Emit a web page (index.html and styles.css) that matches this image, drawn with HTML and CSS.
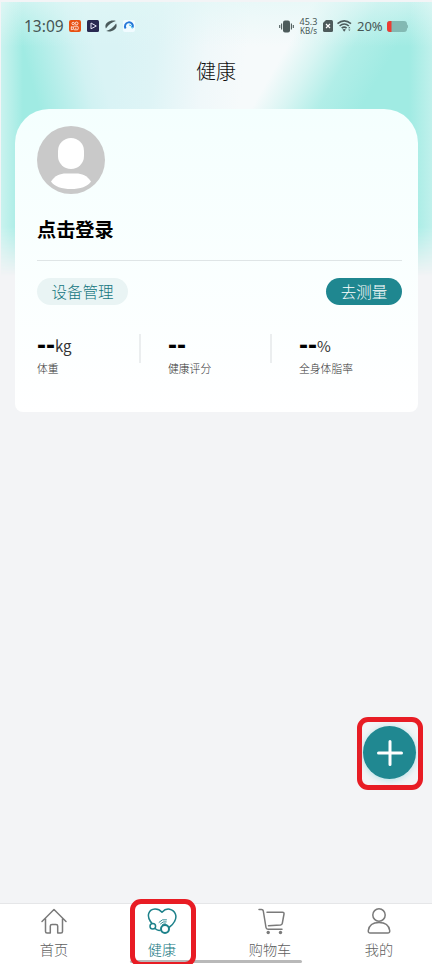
FILE: index.html
```html
<!DOCTYPE html>
<html lang="zh-CN">
<head>
<meta charset="utf-8">
<title>健康</title>
<link rel="stylesheet" href="styles.css">
</head>
<body>
<div class="app">
  <div class="backdrop"></div>
  <header class="status">
    <span class="time">13:09</span>
    <div class="apps">
      <svg width="12" height="12" viewBox="0 0 12 12"><rect width="12" height="12" rx="2" fill="#e85112"/><g fill="none" stroke="#fff" stroke-width=".8"><circle cx="4.2" cy="3.5" r="1.2"/><circle cx="7.6" cy="3.4" r="1.4"/><rect x="4.6" y="6.2" width="4.600" height="3.6" rx="1"/><path d="M4.3 7.3 2.3 6.7V9.7L4.3 9.1M6 8.2h1.5"/></g></svg>
      <svg width="12" height="12" viewBox="0 0 12 12"><rect width="12" height="12" rx="1.5" fill="#292951"/><path d="M4 8.800V3L9.3 6 4 8.800" fill="none" stroke="#e4e2f4" stroke-width="1"/></svg>
      <svg width="12" height="12" viewBox="0 0 12 12"><path d="M.9 8.500C-1.500 3.500 5-.8 10.900 1 7.500 1.700 3.600 4.300.9 8.500ZM11.100 3.500C13.500 8.500 7 12.800 1.100 11 4.500 10.300 8.400 7.700 11.100 3.500Z" fill="#4b5b5c"/></svg>
      <svg width="12" height="12" viewBox="0 0 12 12"><rect width="12" height="12" rx="2" fill="#f1fbff"/><path d="M2.600 8.500A4 4 0 1 1 9.800 7.500" fill="none" stroke="#2677d8" stroke-width="2"/><path d="M6 5Q8.500 4.500 9.300 8.500" fill="none" stroke="#37b9f0" stroke-width="1"/></svg>
    </div>
    <div class="signals">
      <svg class="vibrate" width="15" height="13" viewBox="0 0 15 13"><rect x="4" y=".5" width="7" height="12" rx="2" fill="#4d5b5b"/><path d="M2.6 3.4v6.2M12.4 3.4v6.2M.7 5v3M14.3 5v3" stroke="#4d5b5b" stroke-width="1.1"/></svg>
      <div class="speed"><span>45.3</span><span>KB/s</span></div>
      <svg class="sim" width="10" height="12" viewBox="0 0 10 12"><path d="M3 0h5.500Q10 0 10 1.500v9Q10 12 8.500 12h-7Q0 12 0 10.500V3Z" fill="#4d5b5b"/><path d="m3 4 4 4m0-4L3 8" stroke="#fff" stroke-width="1.200"/></svg>
      <svg class="wifi" width="15" height="12" viewBox="0 0 15 12"><g fill="none" stroke="#4d5b5b" stroke-width="1.600"><path d="M.5 3.700Q7.200-1.800 14 3.700"/><path d="M2.600 6Q7.200 2 11.900 6"/><path d="M4.700 8.200Q7.200 6 9.600 8.200"/></g><path d="M5.500 9.600Q7.200 8.400 8.900 9.600L7.200 11.700Z" fill="#4d5b5b"/><path d="m11.200 8.300 1.100-1.500 1.100 1.500Zm0 1.300 1.100 1.500 1.100-1.500Z" fill="#4d5b5b"/></svg>
      <span class="percent">20%</span>
      <svg class="battery" width="21" height="11" viewBox="0 0 21 11"><rect width="20" height="11" rx="3" fill="#83b9b3"/><path d="M20 3.500q1 0 1 2t-1 2Z" fill="#83b9b3"/><path d="M3 0h1.500v11H3Q0 11 0 8V3Q0 0 3 0Z" fill="#ed3b32"/></svg>
    </div>
  </header>
  <h1 class="title">健康</h1>
  <main class="card">
    <svg class="avatar" width="68" height="68" viewBox="0 0 68 68"><circle cx="34" cy="34" r="34" fill="#c9c9c9"/><rect x="21" y="12" width="26" height="31" rx="13" fill="#fff"/><path d="M14 55.500C18 49.500 23 47.500 29 47.500H39C45 47.500 50 49.500 54 55.500 51 60.500 43 63 34 63S17 60.500 14 55.500Z" fill="#fff"/></svg>
    <div class="login">点击登录</div>
    <div class="actions">
      <button class="pill device">设备管理</button>
      <button class="pill measure">去测量</button>
    </div>
    <div class="stats">
      <div class="stat"><div class="value"><b>--</b>kg</div><div class="label">体重</div></div>
      <div class="stat"><div class="value"><b>--</b></div><div class="label">健康评分</div></div>
      <div class="stat"><div class="value"><b>--</b>%</div><div class="label">全身体脂率</div></div>
    </div>
  </main>
  <div class="fab-frame"><button class="fab"><svg width="26" height="26" viewBox="0 0 26 26"><path d="M13 1.500v23M1.500 13h23" stroke="#fff" stroke-width="3" stroke-linecap="round"/></svg></button></div>
  <nav class="tabs">
    <div class="tab"><svg width="28" height="28" viewBox="0 0 28 28"><path d="M2 14.500 14 2.500 26 14.500M5.500 12V24.500Q5.500 26 7 26H10.300V19Q10.300 17.500 12 17.500H16Q17.700 17.500 17.700 19V26H21Q22.500 26 22.500 24.500V12"/></svg><span>首页</span></div>
    <div class="tab active"><svg width="30" height="28" viewBox="0 0 30 28"><path d="M3.500 14.500C-.5 9 1.500 2.300 8 2 11.500 1.900 13.500 3.500 15 5.200 17 3 19.800 1.700 22.500 2.200 28.500 3.500 30.500 9.500 27.500 14.500 26 17.500 24.300 19 22 20.500"/><path d="M5 16.500 3.500 14.500M8 21.500Q10.500 23.800 13 23.300" /><circle cx="5.800" cy="19.300" r="2.800"/><circle cx="18" cy="22" r="4" stroke-width="2"/><path d="M12 15.300Q15 11.500 19.500 12.700M13.500 16.800Q16 14 19.200 14.800M15.500 17.500Q17 16.500 18.500 16.800" stroke-width=".9"/></svg><span>健康</span></div>
    <div class="tab"><svg class="cart" width="28" height="28" viewBox="0 0 28 28"><path d="M1 2.500H3.500Q5 2.500 5.300 4L8 20.500Q8.200 22.300 10 22.300H24M9 5.300H24.500Q26.300 5.300 26 7L24.300 16.300Q24 17.800 22.500 18L10.500 18.800"/><circle class="dot" cx="10.200" cy="25.500" r="1.700"/><circle class="dot" cx="22.500" cy="25.500" r="1.700"/></svg><span>购物车</span></div>
    <div class="tab mine"><svg width="28" height="28" viewBox="0 0 28 28"><circle cx="14" cy="8" r="6.200"/><path d="M5.300 26Q3 26 3.300 23.500C4 18.500 8 15.500 14 15.500S24 18.500 24.700 23.500Q25 26 22.700 26Z"/></svg><span>我的</span></div>
    <div class="home-bar"></div>
    <div class="tab-frame"></div>
  </nav>
</div>
</body>
</html>
```
FILE: styles.css
```css
* { box-sizing: border-box; }
body { margin: 0; background: #f3f4f6; font-family: "Noto Sans CJK SC", sans-serif; font-weight: 300; }
.app { position: relative; height: 964px; overflow: hidden; display: flex; flex-direction: column; }
.backdrop {
  position: absolute; z-index: 0; left: 1px; top: 2px; right: 0; height: 274px;
  background:
    linear-gradient(90deg, rgba(243,250,250,.5) 0, rgba(243,250,250,0) 22px, rgba(243,250,250,0) 408px, rgba(243,250,250,.38) 431px),
    linear-gradient(180deg, rgba(225,247,246,.62) 0, rgba(225,247,246,0) 45px),
    linear-gradient(75deg, #a0ebe3 80px, rgba(160,235,227,.6) 105px, rgba(160,235,227,.15) 132px, rgba(160,235,227,0) 150px),
    linear-gradient(120deg, rgba(160,235,227,0) 270px, rgba(160,235,227,.35) 298px, rgba(160,235,227,.8) 328px, #a0ebe3 365px),
    linear-gradient(97deg, #d9f3f5 120px, #def4f6 160px, #f0f8fa 210px, #f6fafb 250px);
  -webkit-mask-image: linear-gradient(#000 225px, transparent 274px);
  mask-image: linear-gradient(#000 225px, transparent 274px);
}
.status { position: relative; height: 52px; padding: 0 24px; display: flex; align-items: center; color: #465655; font-weight: 400; }
.time { width: 45px; padding-bottom: 1px; font-family: "Noto Sans", sans-serif; font-size: 15.500px; line-height: 20px; }
.apps { display: flex; gap: 6px; }
.signals { margin-left: auto; display: flex; align-items: center; }
.speed { width: 21px; margin: 0 4px; display: grid; grid-template-rows: 9px 8px; justify-items: center; font-family: "Noto Sans", sans-serif; font-size: 9px; line-height: 8px; }
.speed span:last-child { font-size: 8px; }
.sim { margin-right: 4px; }
.percent { width: 35px; padding-left: 5px; font-family: "Noto Sans", sans-serif; font-size: 13px; }
.title { position: relative; margin: 0; height: 57px; padding-top: 4px; text-align: center; font-size: 20px; line-height: 30px; font-weight: 300; color: #111; }
.card { position: relative; width: 403px; height: 303px; margin-left: 15px; padding: 17px 16px 0 22px; border-radius: 34px 34px 8px 8px; background: linear-gradient(#f4fffe, #fff); }
.avatar { display: block; }
.login { height: 67px; padding-top: 21px; border-bottom: 1px solid #dfe5e6; font-size: 19.200px; line-height: 29px; font-weight: 700; color: #000; }
.actions { display: flex; justify-content: space-between; padding-top: 17px; }
.pill { height: 27px; padding: 0; border: 0; border-radius: 14px; font-family: inherit; font-weight: 300; font-size: 15.500px; line-height: 27px; }
.device { width: 91px; background: #e9f4f4; color: #14767e; }
.measure { width: 76px; background: #1f8790; color: #fff; }
.stats { display: grid; grid-template-columns: 103px 131px 1fr; padding-top: 29px; }
.stat { height: 46px; }
.stat + .stat { position: relative; padding-left: 28px; }
.stat + .stat::before { content: ""; position: absolute; left: -1px; top: 0; width: 2px; height: 29px; background: #ebeeef; }
.value { height: 24px; display: flex; align-items: center; font-size: 15px; line-height: 24px; color: #333; font-weight: 400; }
.value b { width: 18px; padding-bottom: 3px; font-family: "Liberation Sans", sans-serif; font-size: 27px; line-height: 18px; font-weight: 700; color: #000; white-space: nowrap; }
.label { font-size: 10.800px; line-height: 20px; color: #333; white-space: nowrap; }
.fab-frame { position: absolute; left: 357px; top: 717px; width: 66px; height: 73px; border: 5px solid #e81c24; border-radius: 11px; padding: 4px 0 0 1px; }
.fab { width: 53px; height: 53px; border: 0; border-radius: 50%; padding: 0; background: #208891; box-shadow: 0 1px 6px rgba(50,190,200,.35); display: grid; place-items: center; }
.tabs { position: relative; margin-top: auto; height: 61px; border-top: 1px solid #e5e6e8; background: #fff; display: grid; grid-template-columns: repeat(4, 1fr); }
.tab { display: flex; flex-direction: column; align-items: center; padding-top: 3px; color: #606060; font-size: 14.200px; line-height: 22px; }
.tab span { margin-top: 3px; }
.tab svg { fill: none; stroke: #7a7a7a; stroke-width: 1.500; stroke-linecap: round; stroke-linejoin: round; }
.tab .dot { fill: #7a7a7a; stroke: none; }
.cart { margin-left: 4px; }
.mine { padding-left: 2px; }
.tab.active { color: #107680; }
.tab.active svg { stroke: #1d818a; }
.home-bar { position: absolute; left: 130px; bottom: 1px; width: 172px; height: 3px; border-radius: 2px; background: #b9b9b9; }
.tab-frame { position: absolute; left: 130px; top: -5px; width: 66px; height: 68px; border: 5px solid #e81c24; border-radius: 11px; }
```
